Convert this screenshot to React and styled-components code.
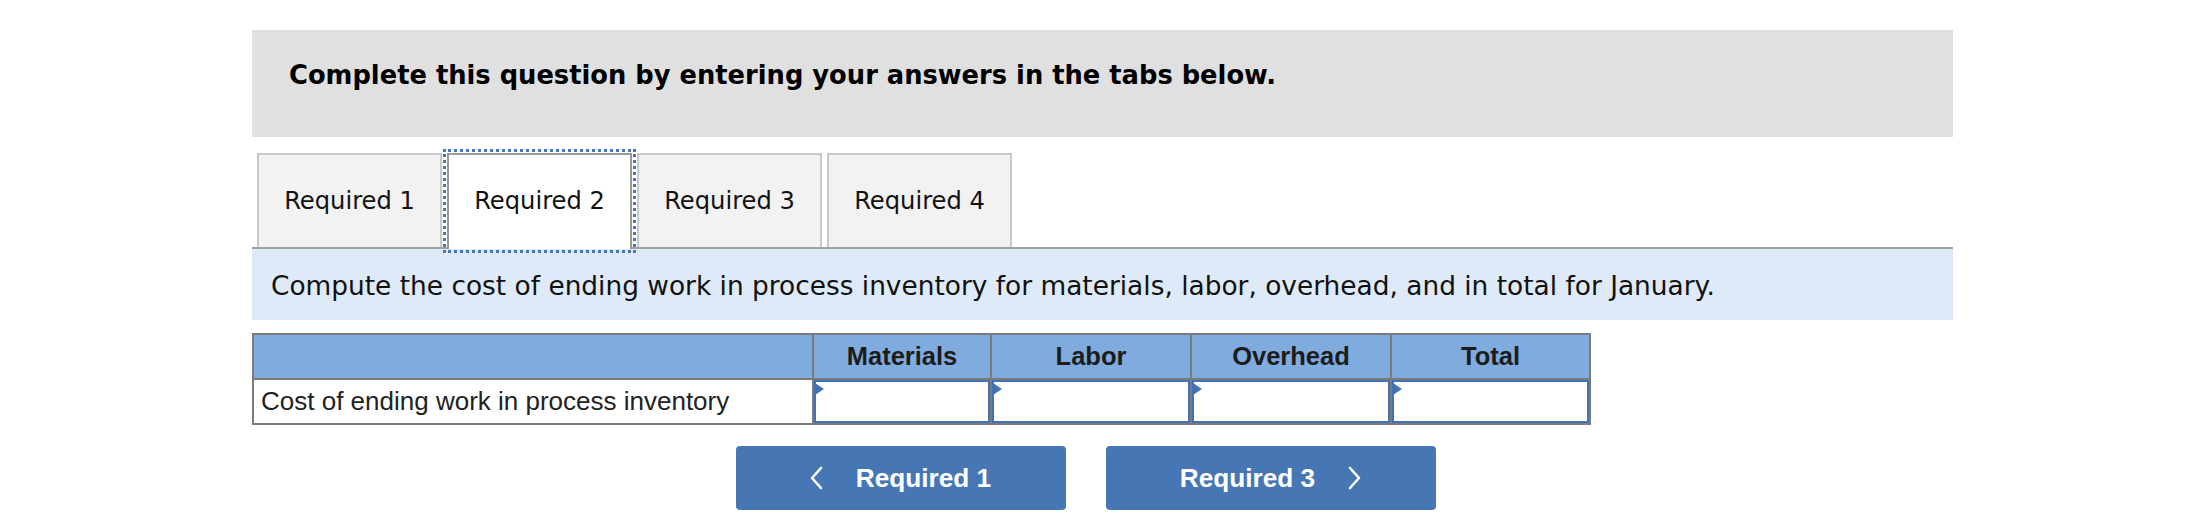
import React from "react";
import styled, { createGlobalStyle } from "styled-components";

const GlobalStyle = createGlobalStyle`
  html, body { margin: 0; padding: 0; background: #ffffff; }
  body { font-family: "DejaVu Sans", Verdana, sans-serif; }
  * { box-sizing: border-box; }
`;

const Page = styled.div`
  width: 2188px;
  height: 528px;
  padding: 30px 0 0 252px;
`;

const Container = styled.div`
  width: 1701px;
  display: flex;
  flex-direction: column;
`;

const Banner = styled.div`
  height: 107px;
  background: #e0e0e0;
  padding: 30px 37px 0;
  font-family: "DejaVu Sans", Verdana, sans-serif;
  font-weight: bold;
  font-size: 25.75px;
  line-height: 30px;
  color: #000;
`;

const TabRow = styled.div`
  display: flex;
  gap: 5px;
  padding-left: 5px;
  margin-top: 16px;
  height: 94px;
  position: relative;
  z-index: 1;
`;

const Tab = styled.div`
  width: 185px;
  height: ${(p) => (p.$active ? "96px" : "94px")};
  display: flex;
  align-items: center;
  justify-content: center;
  padding-bottom: ${(p) => (p.$active ? "2px" : "0")};
  background: ${(p) => (p.$active ? "#ffffff" : "#f2f2f2")};
  border: 2px solid ${(p) => (p.$active ? "#9a9a9a" : "#c9c9c9")};
  border-bottom: none;
  font-family: "DejaVu Sans", Verdana, sans-serif;
  font-size: 24.2px;
  color: #111;
  outline: ${(p) => (p.$active ? "3px dotted #4676b8" : "none")};
  outline-offset: 1px;
`;

const Instruction = styled.div`
  height: 73px;
  border-top: 2px solid #a2a2a2;
  background: #deeaf7;
  display: flex;
  align-items: center;
  padding: 1px 18px 0 19px;
  font-family: "DejaVu Sans", Verdana, sans-serif;
  font-size: 26.4px;
  color: #111;
`;

const Grid = styled.div`
  margin-top: 13px;
  width: 1339px;
  display: grid;
  grid-template-columns: 558px 176px 198px 198px 197px;
  grid-template-rows: 43px 43px;
  gap: 2px;
  border: 2px solid #7b7b7b;
  background: #7b7b7b;
`;

const HeadCell = styled.div`
  background: #80abdf;
  display: flex;
  align-items: center;
  justify-content: center;
  padding-bottom: 1px;
  font-family: "Liberation Sans", Arial, sans-serif;
  font-weight: bold;
  font-size: 25.5px;
  color: #1c1c1c;
`;

const LabelCell = styled.div`
  background: #ffffff;
  display: flex;
  align-items: center;
  padding-left: 7px;
  font-family: "Liberation Sans", Arial, sans-serif;
  font-size: 26px;
  color: #222;
`;

const InputCell = styled.div`
  background: #ffffff;
  position: relative;
`;

const Input = styled.input`
  display: block;
  width: 100%;
  height: 100%;
  margin: 0;
  border: 2px solid #4471b3;
  background: #ffffff;
  font-family: "Liberation Sans", Arial, sans-serif;
  font-size: 24px;
  padding: 0 10px;
  outline: none;
`;

const Marker = styled.span`
  position: absolute;
  left: 1px;
  top: 3px;
  width: 0;
  height: 0;
  border-top: 6px solid transparent;
  border-bottom: 6px solid transparent;
  border-left: 9px solid #4471b3;
  pointer-events: none;
`;

const NavRow = styled.div`
  margin-top: 21px;
  display: flex;
  justify-content: center;
  gap: 40px;
  padding-right: 34px;
`;

const NavButton = styled.button`
  width: 330px;
  height: 64px;
  border: none;
  border-radius: 4px;
  background: #4677b4;
  color: #ffffff;
  display: flex;
  align-items: center;
  justify-content: center;
  gap: 33px;
  font-family: "Liberation Sans", Arial, sans-serif;
  font-weight: bold;
  font-size: 26.2px;
  padding: 0;
  cursor: pointer;
`;

const Chevron = ({ dir }) => (
  <svg width="13" height="24" viewBox="0 0 13 24" fill="none">
    <polyline
      points={dir === "left" ? "11,2 2,12 11,22" : "2,2 11,12 2,22"}
      stroke="#ffffff"
      strokeWidth="2.6"
      strokeLinecap="round"
      strokeLinejoin="round"
    />
  </svg>
);

const tabs = ["Required 1", "Required 2", "Required 3", "Required 4"];
const heads = ["Materials", "Labor", "Overhead", "Total"];

export default function App() {
  return (
    <>
      <GlobalStyle />
      <Page>
        <Container>
          <Banner>Complete this question by entering your answers in the tabs below.</Banner>
          <TabRow>
            {tabs.map((t, i) => (
              <Tab key={t} $active={i === 1}>
                {t}
              </Tab>
            ))}
          </TabRow>
          <Instruction>
            Compute the cost of ending work in process inventory for materials, labor, overhead, and in total for January.
          </Instruction>
          <Grid>
            <HeadCell />
            {heads.map((h) => (
              <HeadCell key={h}>{h}</HeadCell>
            ))}
            <LabelCell>Cost of ending work in process inventory</LabelCell>
            {heads.map((h) => (
              <InputCell key={h}>
                <Input type="text" aria-label={h} />
                <Marker />
              </InputCell>
            ))}
          </Grid>
          <NavRow>
            <NavButton>
              <Chevron dir="left" />
              <span>Required 1</span>
            </NavButton>
            <NavButton>
              <span>Required 3</span>
              <Chevron dir="right" />
            </NavButton>
          </NavRow>
        </Container>
      </Page>
    </>
  );
}
